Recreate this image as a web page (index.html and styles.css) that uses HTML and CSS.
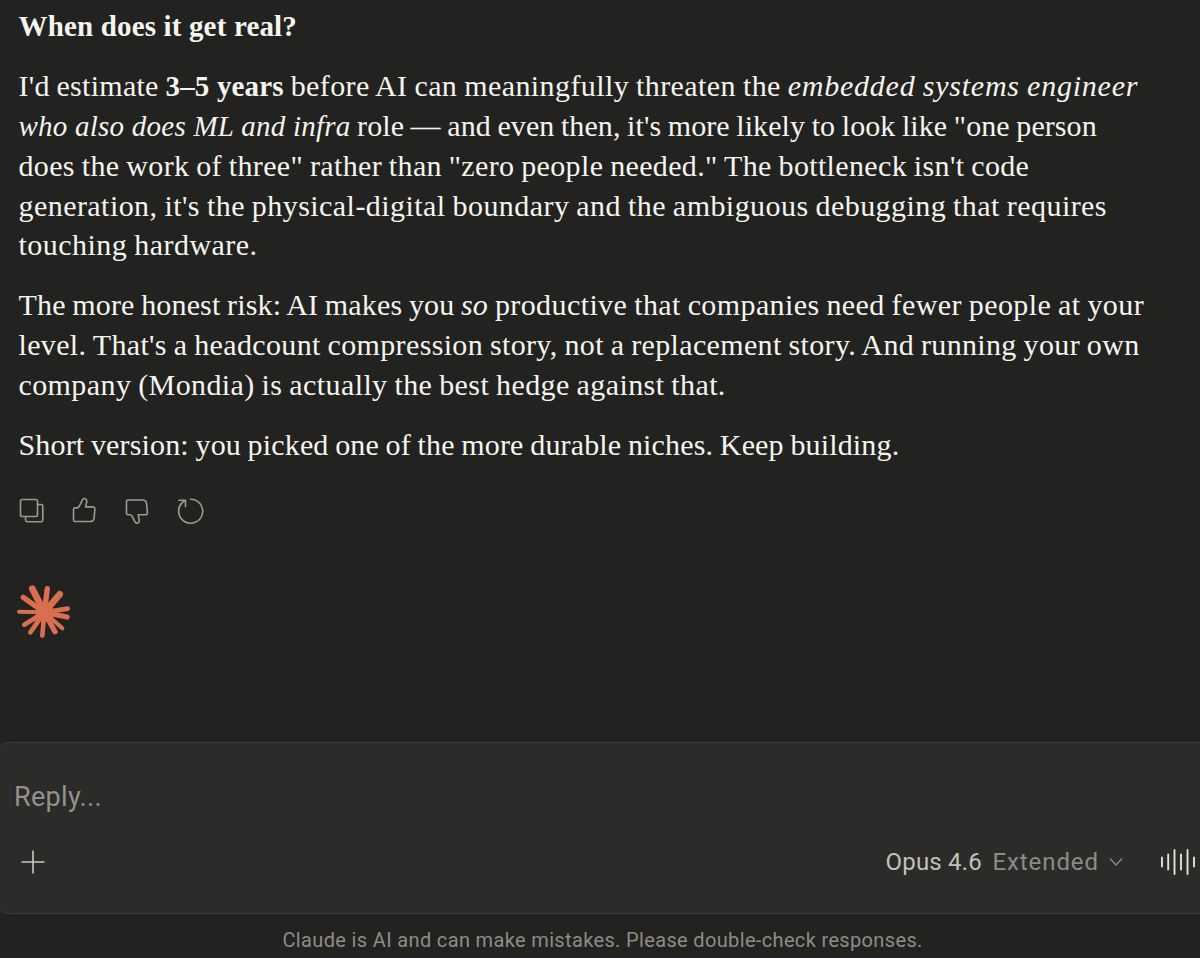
FILE: index.html
```html
<!DOCTYPE html>
<html lang="en">
<head>
<meta charset="utf-8">
<title>Chat</title>
<link rel="stylesheet" href="styles.css">
</head>
<body>
<main class="message">
<p><span class="line"><strong class="t14">When does it get real?</strong></span></p>
<p><span class="line"><span class="t28">I'd estimate </span><strong class="t14">3–5 years</strong><span class="t41"> before AI can meaningfully threaten the </span><em class="t77">embedded systems engineer</em></span>
<span class="line"><em class="t24">who also does ML and infra</em><span class="t08"> role — and even then, it's more likely to look like "one person</span></span>
<span class="line t35">does the work of three" rather than "zero people needed." The bottleneck isn't code</span>
<span class="line t44">generation, it's the physical-digital boundary and the ambiguous debugging that requires</span>
<span class="line t47">touching hardware.</span></p>
<p><span class="line"><span class="t15">The more honest risk: AI makes you </span><em class="t15">so</em><span class="t40"> productive that companies need fewer people at your</span></span>
<span class="line t35">level. That's a headcount compression story, not a replacement story. And running your own</span>
<span class="line t40">company (Mondia) is actually the best hedge against that.</span></p>
<p><span class="line t15">Short version: you picked one of the more durable niches. Keep building.</span></p>
</main>
<div class="actions">
<svg class="action" viewBox="0 0 28 28"><rect x="3.5" y="2.5" width="17" height="17" rx="1.8"/><path d="M20.5 7.500h3.700a1.600 1.600 0 0 1 1.600 1.600v14a1.600 1.600 0 0 1-1.600 1.600h-14a1.600 1.600 0 0 1-1.600-1.600v-3.600"/></svg>
<svg class="action" viewBox="0 0 28 28"><path d="M3.500 12.500q0-1.600 1.600-1.600h1.700q1.600 0 2.400-1.600l3.100-6.200q.8-1.800 2.400-1.600 2.600.6 2 3.600l-1.100 4.800h7q2.500.1 2.300 2.500l-.8 8.400q-.4 3.700-4.100 3.700H5.100q-1.600 0-1.600-1.600z"/></svg>
<svg class="action" viewBox="0 0 28 28"><path d="M3.500 16.200q0 1.600 1.600 1.600h1.700q1.600 0 2.400 1.600l2.600 5.200q.8 1.800 2.400 1.600 2.600-.6 2-3.600l-1.100-4.800h7q2.500-.1 2.300-2.500l-.8-8.600q-.4-3.700-4.100-3.700H5.100q-1.600 0-1.600 1.600z"/></svg>
<svg class="action" viewBox="0 0 28 28"><path d="M14.500 2.200a12 12 0 1 1-8 3.200L9.500 3.200M3 3.200h6.500v6.500"/></svg>
</div>
<svg class="spark" viewBox="45 39 168 168">
<g fill="none" stroke="#d96f50" stroke-linecap="round">
<path stroke-width="20" d="M133 127L97 56M133 127L179 73"/>
<path stroke-width="16" d="M133 127L70 82M133 127L142 56M133 127L201 141M133 127L165 185"/>
<path stroke-width="14" d="M133 127L203 116M133 127L127 197M133 127L91 187M133 127L73 164"/>
<path stroke-width="12" d="M133 127L57 125M133 127L187 175"/>
</g>
<circle cx="134" cy="128" r="27" fill="#d96f50"/>
</svg>
<section class="composer">
<div class="placeholder">Reply...</div>
<div class="toolbar">
<svg class="plus" viewBox="0 0 24 24"><path d="M12 .5v23M.5 12h23"/></svg>
<div class="model"><span class="name">Opus 4.6</span><span class="mode">Extended</span><svg class="chevron" viewBox="0 0 14 10"><path d="M1 1.500l6 6.500 6-6.500"/></svg></div>
<svg class="voice" viewBox="0 0 36 28"><path d="M2 9.500v9M8.200 6.500v15M14.500 2v24M21 6.500v15M27.500 2v24M34 9.500v9"/></svg>
</div>
</section>
<footer class="notice">Claude is AI and can make mistakes. Please double-check responses.</footer>
</body>
</html>
```
FILE: styles.css
```css
* { box-sizing: border-box; }
body {
  margin: 0;
  height: 958px;
  overflow: hidden;
  background: #222220;
  color: #f5f4ef;
  font-family: Roboto, sans-serif;
}
svg { display: block; flex: none; }
.message {
  height: 493px;
  padding: 6px 0 0 18.5px;
  font: 30px/39.9px "Liberation Serif", serif;
  word-spacing: -1px;
}
.message p { margin: 0 0 20px; }
.line { display: block; height: 39.9px; white-space: pre; }
.t08 { letter-spacing: .08px; }
.t14 { font-size: 29px; letter-spacing: .16px; word-spacing: 0; }
.t15 { letter-spacing: .155px; }
.t24 { font-size: 29px; letter-spacing: .24px; word-spacing: 0; }
.t28 { letter-spacing: .28px; }
.t35 { letter-spacing: .352px; }
.t40 { letter-spacing: .403px; }
.t41 { letter-spacing: .415px; }
.t44 { letter-spacing: .445px; }
.t47 { letter-spacing: .47px; }
.t77 { letter-spacing: .77px; }

.actions {
  display: flex;
  gap: 25px;
  padding: 4px 0 0 17px;
}
.action {
  width: 28px;
  height: 28px;
  fill: none;
  stroke: #9b9991;
  stroke-width: 1.6;
  stroke-linecap: round;
  stroke-linejoin: round;
}
.spark {
  width: 56px;
  height: 56px;
  margin: 58px 0 0 15px;
}

.composer {
  width: 1260px;
  height: 172px;
  margin: 103px 0 0 -16px;
  padding: 34px 0 0 29px;
  background: #2b2b29;
  border: 1px solid #3c3c39;
  border-radius: 28px;
}
.placeholder {
  height: 40px;
  color: #93918a;
  font-size: 27px;
  line-height: 40px;
  letter-spacing: .3px;
}
.toolbar {
  display: flex;
  align-items: center;
  height: 40px;
  margin-top: 25px;
}
.plus {
  width: 24px;
  height: 24px;
  margin-left: 7px;
  fill: none;
  stroke: #c9c7be;
  stroke-width: 1.6;
}
.model {
  display: flex;
  align-items: center;
  margin-left: 840.5px;
  font-size: 24px;
  line-height: 40px;
}
.name { width: 107px; color: #c3c1b8; letter-spacing: .2px; }
.mode { width: 116px; color: #8d8b84; letter-spacing: .9px; }
.chevron {
  width: 14px;
  height: 10px;
  fill: none;
  stroke: #8d8b84;
  stroke-width: 1.3;
}
.voice {
  width: 36px;
  height: 28px;
  margin-left: 37.5px;
  fill: none;
  stroke: #e2e0d8;
  stroke-width: 1.9;
  stroke-linecap: round;
}
.notice {
  padding: 10px 0 0 282.5px;
  color: #8e8c85;
  font-size: 20px;
  line-height: 32px;
  letter-spacing: .35px;
  white-space: nowrap;
}
```
